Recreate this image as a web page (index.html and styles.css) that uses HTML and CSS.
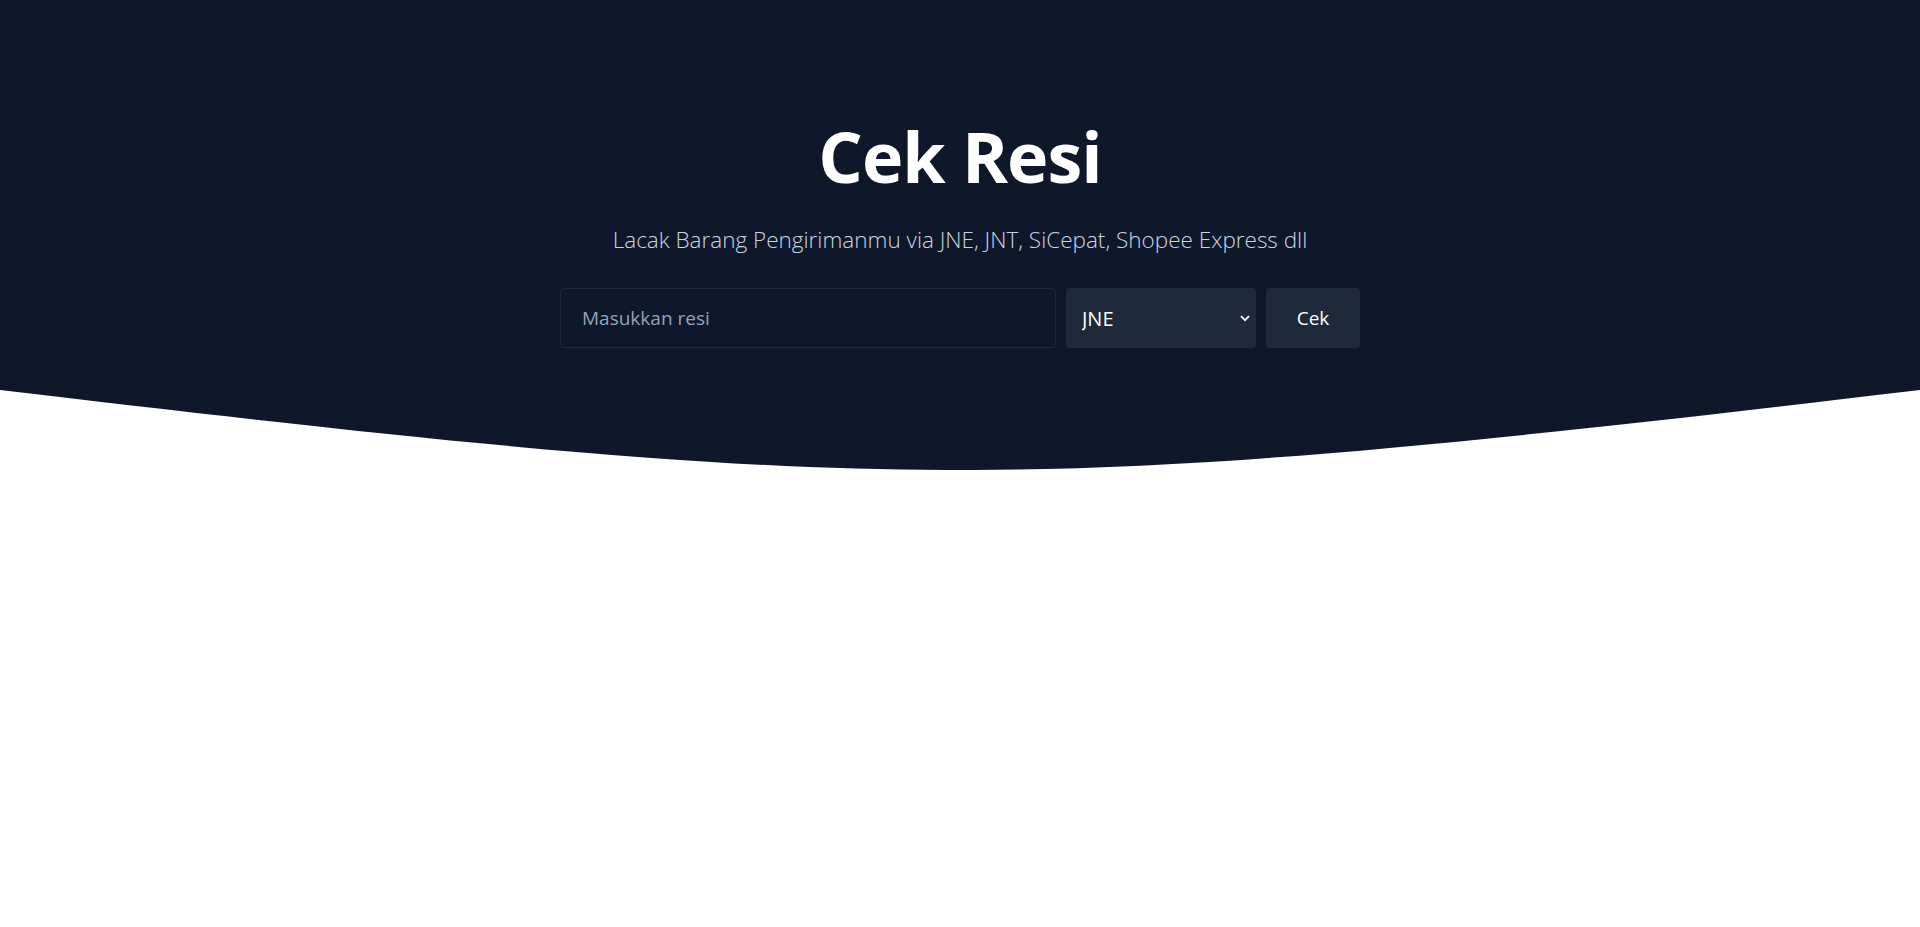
FILE: index.html
```html
<!DOCTYPE html>
<html lang="id">
<head>
<meta charset="utf-8">
<title>Cek Resi</title>
<link rel="stylesheet" href="styles.css">
</head>
<body>
<section class="hero">
  <h1 class="title">Cek Resi</h1>
  <p class="subtitle">Lacak Barang Pengirimanmu via JNE, JNT, SiCepat, Shopee Express dll</p>
  <form class="search" onsubmit="return false">
    <input class="resi-input" type="text" placeholder="Masukkan resi">
    <div class="select-wrap">
      <select class="courier">
        <option>JNE</option>
        <option>JNT</option>
        <option>SiCepat</option>
        <option>Shopee Express</option>
      </select>
      <svg class="chevron" width="12" height="12" viewBox="0 0 12 12"><path d="M2 4.2 L6 8.2 L10 4.2" fill="none" stroke="#ffffff" stroke-width="1.8"/></svg>
    </div>
    <button class="cek-btn" type="submit">Cek</button>
  </form>
</section>
<svg class="wave" viewBox="0 0 1920 80" preserveAspectRatio="none"><path d="M0,0 C900,106.7 1020,106.7 1920,0 Z" fill="#0f172a"/></svg>
</body>
</html>
```
FILE: styles.css
```css
html, body {
  margin: 0;
  padding: 0;
  background: #ffffff;
}
body {
  font-family: "Open Sans", "Noto Sans", sans-serif;
}
.hero {
  background: #0f172a;
  height: 390px;
  box-sizing: border-box;
  padding-top: 108px;
  text-align: center;
}
.title {
  margin: 0;
  font-size: 70px;
  line-height: 96px;
  font-weight: 700;
  color: #ffffff;
  letter-spacing: -1px;
}
.subtitle {
  margin: 21px 0 0;
  font-size: 22.5px;
  line-height: 30px;
  font-weight: 300;
  color: #cbd5e1;
}
.search {
  display: flex;
  gap: 10px;
  width: 800px;
  margin: 33px auto 0;
  height: 60px;
}
.resi-input {
  flex: 1;
  box-sizing: border-box;
  height: 60px;
  background: #0f172a;
  border: 1px solid #1e293b;
  border-radius: 4px;
  padding: 0 21px;
  font-family: inherit;
  font-size: 19px;
  color: #ffffff;
  outline: none;
}
.resi-input::placeholder {
  color: #94a3b8;
}
.select-wrap {
  position: relative;
  width: 190px;
  height: 60px;
}
.courier {
  appearance: none;
  -webkit-appearance: none;
  width: 100%;
  height: 60px;
  box-sizing: border-box;
  background: #1e293b;
  border: none;
  border-radius: 4px;
  padding: 0 30px 0 16px;
  font-family: inherit;
  font-size: 20px;
  font-weight: 500;
  color: #ffffff;
  outline: none;
}
.chevron {
  position: absolute;
  right: 5px;
  top: 24px;
  pointer-events: none;
}
.cek-btn {
  width: 94px;
  height: 60px;
  background: #1e293b;
  border: none;
  border-radius: 4px;
  font-family: inherit;
  font-size: 19px;
  font-weight: 500;
  color: #ffffff;
  cursor: pointer;
}
.wave {
  display: block;
  width: 100%;
  height: 80px;
}
```
